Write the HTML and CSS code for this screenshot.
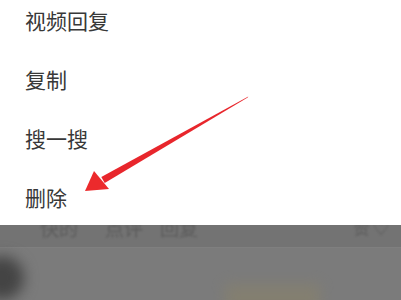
FILE: index.html
```html
<!DOCTYPE html>
<html lang="zh-CN">
<head>
  <meta charset="UTF-8" />
  <title>菜单</title>
  <link rel="stylesheet" href="styles.css">
</head>
<body>
  <div class="menu">
    <ul class="menu-list">
      <li>视频回复</li>
      <li>复制</li>
      <li>搜一搜</li>
      <li>删除</li>
    </ul>
  </div>

  <div class="page">
    <div class="tabs">
      <span class="tab t1">快的</span>
      <span class="tab t2">点评</span>
      <span class="tab t3">回复</span>
      <span class="tab t4">赞 ♡</span>
    </div>
    <div class="feed">
      <div class="avatar"></div>
      <div class="thumb"></div>
    </div>
  </div>

  <!-- red arrow pointing at 删除 -->
  <svg class="arrow" width="401" height="300" viewBox="0 0 401 300">
    <polygon points="248.3,96.6 247.7,97.4 104.7,183 101.3,177" fill="#e8262c"/>
    <polygon points="85,191 94,171 109,189" fill="#ec2a2c"/>
  </svg>
</body>
</html>
```

FILE: styles.css
```css
body {
  margin: 0;
  width: 401px;
  height: 300px;
  overflow: hidden;
  background-color: #7b7b7b;
  font-family: "Noto Sans CJK SC", "Noto Sans", sans-serif;
}
.menu {
  background: white;
  height: 225px;
  overflow: hidden;
}
.menu-list {
  list-style: none;
  margin: -9px 0 0 0;
  padding: 0 0 0 25px;
}
.menu-list li {
  height: 59px;
  line-height: 59px;
  font-size: 21px;
  color: #383838;
}
.page {
  height: 75px;
  position: relative;
  overflow: hidden;
}
.tabs {
  height: 22px;
  background-color: #737373;
  display: flex;
  align-items: flex-end;
  overflow: hidden;
  position: relative;
}
.tab {
  font-size: 19px;
  line-height: 19px;
  color: #5c5c5c;
  filter: blur(1px);
  margin-bottom: 10px;
}
.t1 { margin-left: 40px; }
.t2 { margin-left: 27px; }
.t3 { margin-left: 17px; }
.t4 { margin-left: auto; margin-right: 12px; font-size: 16px; }
.feed {
  height: 53px;
  position: relative;
  border-top: 1px solid #7f7f7f;
}
.avatar {
  position: absolute;
  left: -20px;
  top: 8px;
  width: 44px;
  height: 44px;
  border-radius: 50%;
  background: #444;
  filter: blur(7px);
}
.thumb {
  position: absolute;
  left: 225px;
  top: 36px;
  width: 95px;
  height: 40px;
  background: #87816c;
  filter: blur(7px);
  opacity: 0.7;
}
.arrow {
  position: absolute;
  left: 0;
  top: 0;
}
```
